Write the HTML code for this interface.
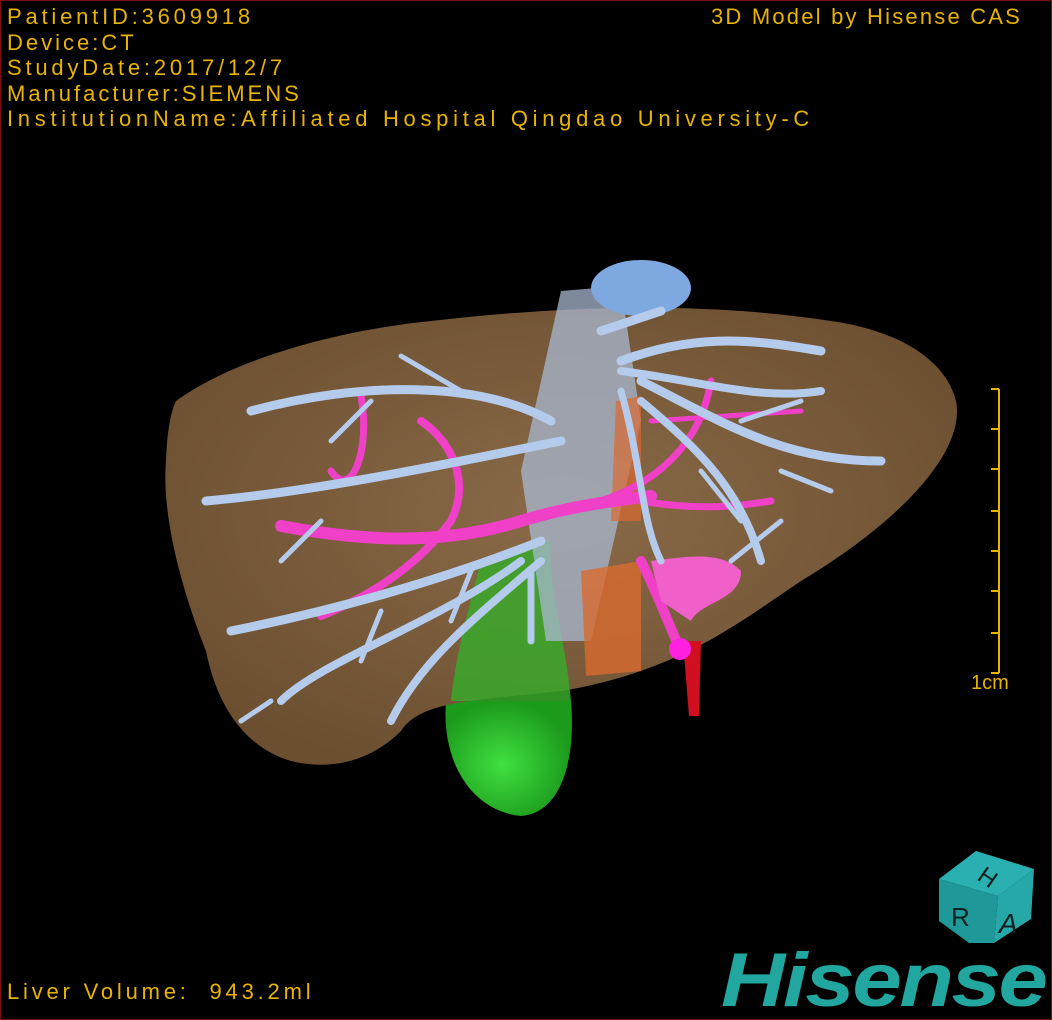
<!DOCTYPE html>
<html><head><meta charset="utf-8"><style>
html,body{margin:0;padding:0;background:#000}
#w{position:relative;width:1050px;height:1018px;border:1px solid #7a1010;background:#000;overflow:hidden;font-family:"Liberation Sans","Noto Sans CJK SC",sans-serif}
.t{position:absolute;color:#e8b400;font-size:22px;line-height:25.5px;white-space:pre;letter-spacing:3.8px}
</style></head><body><div id="w">
<svg width="1050" height="1018" style="position:absolute;left:0;top:0">
<defs>
<radialGradient id="lv" cx="50%" cy="45%" r="60%"><stop offset="0" stop-color="#8a6a48"/><stop offset="1" stop-color="#6b4f30"/></radialGradient>
<radialGradient id="gb" cx="45%" cy="55%" r="55%"><stop offset="0" stop-color="#40e040"/><stop offset="1" stop-color="#1c9a1c"/></radialGradient>
</defs>
<path d="M445 700 C440 760 470 810 520 815 C560 812 575 760 570 700 Z" fill="url(#gb)"/>
<path d="M175 400 C230 360 330 330 430 320 C560 305 700 300 830 320 C900 330 945 360 955 400 C965 450 900 520 800 580 C740 620 680 670 560 690 C470 700 420 700 400 730 C370 760 330 770 290 760 C240 745 215 700 205 650 C185 600 160 520 165 460 C166 430 170 410 175 400 Z" fill="url(#lv)"/>
<path d="M480 560 C470 600 455 650 450 700 L570 700 C565 640 545 580 550 540 Z" fill="#3aa82a" opacity="0.85"/>
<path d="M560 290 L620 285 L640 420 L590 640 L545 640 L520 470 Z" fill="#a8b8d0" opacity="0.75"/>
<ellipse cx="640" cy="287" rx="50" ry="28" fill="#7ea8e0"/>
<path d="M580 570 L640 560 L640 670 L585 675 Z" fill="#d86a30" opacity="0.8"/>
<path d="M615 400 L640 395 L640 520 L610 520 Z" fill="#d86a30" opacity="0.7"/>
<path d="M682 640 L700 640 L698 715 L688 715 Z" fill="#d01020"/>
<g stroke="#f040c8" stroke-linecap="round" fill="none">
<path d="M280 525 C360 540 440 545 520 520 C570 505 610 500 650 495" stroke-width="12"/>
<path d="M320 615 C380 590 420 560 450 520 C470 480 450 440 420 420" stroke-width="8"/>
<path d="M360 395 C370 450 350 500 330 470" stroke-width="7"/>
<path d="M600 500 C660 480 700 440 710 380" stroke-width="7"/>
<path d="M640 500 C700 510 740 505 770 500" stroke-width="7"/>
<path d="M650 420 L800 410" stroke-width="5"/>
<path d="M640 560 C660 600 670 630 680 650" stroke-width="10"/>
</g>
<path d="M650 560 C690 555 720 550 740 570 C740 600 700 600 690 620 L660 600 Z" fill="#f060c8"/>
<circle cx="679" cy="648" r="11" fill="#ff20e0"/>
<g stroke="#b4cbec" stroke-linecap="round" fill="none">
<path d="M550 420 C480 380 360 380 250 410" stroke-width="9"/>
<path d="M560 440 C460 460 320 490 205 500" stroke-width="9"/>
<path d="M540 540 C440 580 330 610 230 630" stroke-width="9"/>
<path d="M540 560 C470 620 420 660 390 720" stroke-width="8"/>
<path d="M520 560 C440 620 320 660 280 700" stroke-width="8"/>
<path d="M530 570 L530 640" stroke-width="7"/>
<path d="M620 360 C700 330 760 340 820 350" stroke-width="9"/>
<path d="M620 370 C700 380 760 400 820 390" stroke-width="8"/>
<path d="M640 380 C720 420 780 460 880 460" stroke-width="9"/>
<path d="M640 400 C700 450 740 490 760 560" stroke-width="8"/>
<path d="M620 390 C640 460 640 520 660 560" stroke-width="7"/>
<path d="M600 330 L660 310" stroke-width="9"/>
<path d="M400 355 L460 390 M330 440 L370 400 M280 560 L320 520 M360 660 L380 610 M450 620 L470 570 M270 700 L240 720" stroke-width="5"/>
<path d="M740 420 L800 400 M780 470 L830 490 M700 470 L740 520 M730 560 L780 520" stroke-width="5"/>
</g>
<g stroke="#e8b400" stroke-width="2" fill="none">
<path d="M998 388 L998 672"/>
<path d="M990 388H998M990 428H998M990 468H998M990 510H998M990 550H998M990 590H998M990 632H998M990 672H998"/>
</g>
<path d="M938 878 L975 850 L1033 868 L997 895 Z" fill="#2ab0b0"/>
<path d="M938 878 L997 895 L993 942 L968 942 L938 920 Z" fill="#1e9898"/>
<path d="M997 895 L1033 868 L1030 918 L993 942 Z" fill="#26a8a8"/>
<text x="975" y="878" font-size="24" fill="#102020" font-family="Liberation Sans" transform="rotate(35 975 878)">H</text>
<text x="950" y="925" font-size="26" fill="#102020" font-family="Liberation Sans">R</text>
<text x="998" y="932" font-size="28" fill="#102020" font-family="Liberation Sans" font-style="italic">A</text>
</svg>
<div class="t" style="left:6px;top:3px">PatientID:3609918</div>
<div class="t" style="left:6px;top:28.5px;letter-spacing:3px">Device:CT</div>
<div class="t" style="left:6px;top:54px">StudyDate:2017/12/7</div>
<div class="t" style="left:6px;top:79.5px;letter-spacing:3px">Manufacturer:SIEMENS</div>
<div class="t" style="left:6px;top:105px;letter-spacing:4.7px">InstitutionName:Affiliated Hospital Qingdao University-C</div>
<div class="t" style="left:710px;top:3px;letter-spacing:2.2px">3D Model by Hisense CAS</div>
<div class="t" style="left:970px;top:670px;font-size:20px;letter-spacing:0">1cm</div>
<div class="t" style="left:6px;top:978px;letter-spacing:3.8px">Liver Volume:  943.2ml</div>
<div style="position:absolute;left:720px;top:942px;color:#22a6a0;font-size:76px;font-weight:bold;font-style:italic;line-height:76px;letter-spacing:-2px;transform:scaleX(1.17);transform-origin:0 0;font-family:'Liberation Sans',sans-serif">Hisense</div>
</div></body></html>
